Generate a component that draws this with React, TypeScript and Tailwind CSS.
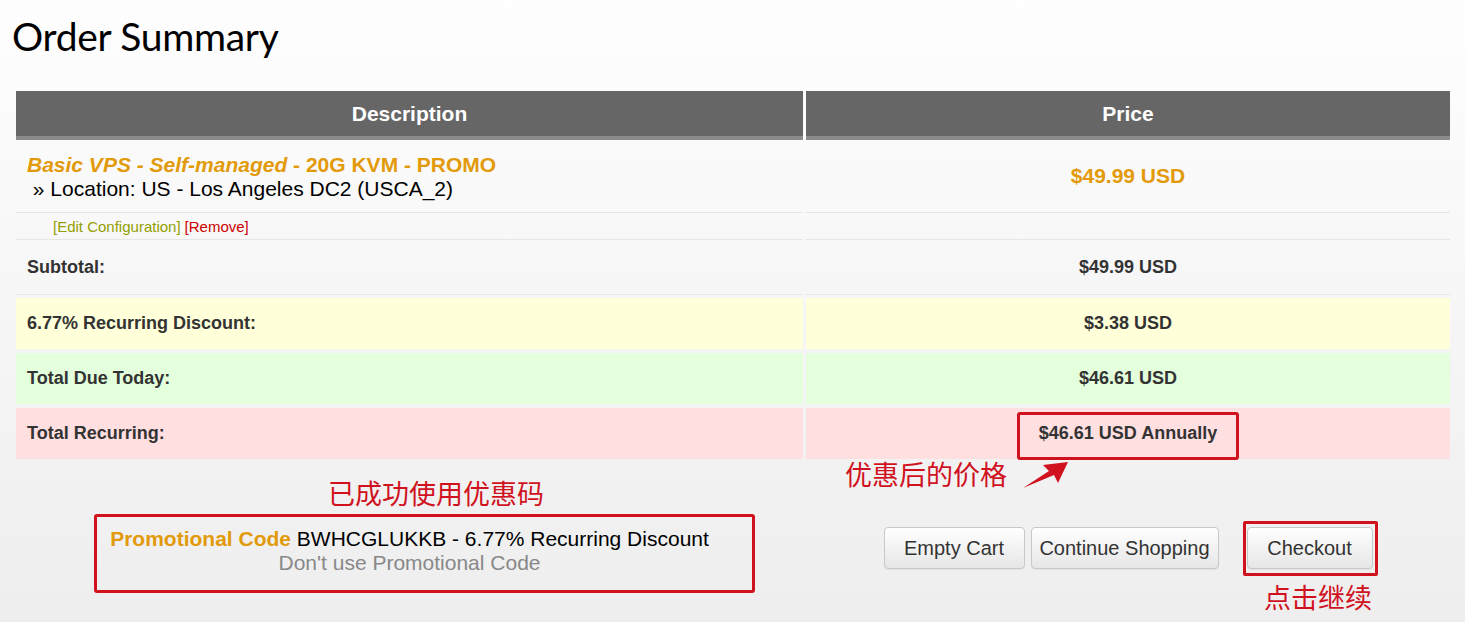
import React from "react";

const ORANGE = "text-[#e29a0a]";

function Btn({ label, w }: { label: string; w: string }) {
  return (
    <button
      className={`${w} h-[42px] rounded-[4px] border border-[#c8c8c8] bg-gradient-to-b from-white to-[#e6e6e6] text-[20px] text-[#333] shadow-[0_1px_1px_rgba(0,0,0,0.06)]`}
    >
      {label}
    </button>
  );
}

function SummaryRow({
  label,
  value,
  bg,
  className = "",
}: {
  label: string;
  value: React.ReactNode;
  bg: string;
  className?: string;
}) {
  return (
    <div className={`flex gap-[3px] ${className}`}>
      <div className={`w-[787px] h-[51px] ${bg} flex items-center pl-[11px] text-[18px] font-bold text-[#333]`}>
        {label}
      </div>
      <div className={`w-[644px] h-[51px] ${bg} flex items-center justify-center text-[18px] font-bold text-[#333]`}>
        {value}
      </div>
    </div>
  );
}

export default function App() {
  return (
    <div className="relative min-h-[622px] bg-gradient-to-b from-[#fefefe] to-[#eeeeee] font-['Liberation_Sans',Arial,sans-serif] text-black">
      <div className="h-[91px] pl-[12px] pt-[12px]">
        <h1 className="font-['Lato','Noto_Sans',sans-serif] text-[39px] leading-[48px] tracking-[-0.3px]">Order Summary</h1>
      </div>

      <div className="ml-[16px] w-[1434px]">
        {/* header */}
        <div className="flex gap-[3px]">
          <div className="w-[787px] h-[49px] bg-[#666] border-b-4 border-[#8b8b8b] flex items-center justify-center text-white text-[21px] font-bold">
            Description
          </div>
          <div className="w-[644px] h-[49px] bg-[#666] border-b-4 border-[#8b8b8b] flex items-center justify-center text-white text-[21px] font-bold">
            Price
          </div>
        </div>

        {/* product */}
        <div className="flex gap-[3px]">
          <div className="w-[787px] h-[73px] border-b border-[#e6e6e6] pt-[13px] pl-[11px] text-[21px] leading-[24px]">
            <div className={`font-bold ${ORANGE}`}>
              <span className="italic">Basic VPS - Self-managed</span> - 20G KVM - PROMO
            </div>
            <div>&nbsp;» Location: US - Los Angeles DC2 (USCA_2)</div>
          </div>
          <div className={`w-[644px] h-[73px] border-b border-[#e6e6e6] flex items-center justify-center text-[21px] font-bold ${ORANGE}`}>
            $49.99 USD
          </div>
        </div>
        <div className="flex gap-[3px]">
          <div className="w-[787px] h-[27px] border-b border-[#e6e6e6] flex items-center pt-[2px] pl-[37px] text-[15px]">
            <span className="text-[#94a000]">[Edit Configuration]</span>
            <span className="ml-[4px] text-[#cc0000]">[Remove]</span>
          </div>
          <div className="w-[644px] h-[27px] border-b border-[#e6e6e6]" />
        </div>

        {/* totals */}
        <div className="flex gap-[3px]">
          <div className="w-[787px] h-[55px] border-b border-[#e8e8e8] flex items-center pl-[11px] text-[18px] font-bold text-[#333]">
            Subtotal:
          </div>
          <div className="w-[644px] h-[55px] border-b border-[#e8e8e8] flex items-center justify-center text-[18px] font-bold text-[#333]">
            $49.99 USD
          </div>
        </div>
        <SummaryRow className="mt-[3px]" bg="bg-[#ffffd9]" label="6.77% Recurring Discount:" value="$3.38 USD" />
        <SummaryRow className="mt-[4px]" bg="bg-[#e4ffdb]" label="Total Due Today:" value="$46.61 USD" />
        <SummaryRow className="mt-[4px]" bg="bg-[#ffdfe0]" label="Total Recurring:" value="$46.61 USD Annually" />
      </div>

      {/* bottom */}
      <div className="ml-[16px] mt-[68px] w-[1434px] flex gap-[3px]">
        <div className="w-[787px] text-center text-[21px] leading-[24px]">
          <div>
            <span className={`font-bold ${ORANGE}`}>Promotional Code</span> BWHCGLUKKB - 6.77% Recurring Discount
          </div>
          <div className="text-[#888]">Don't use Promotional Code</div>
        </div>
        <div className="w-[644px] flex justify-center">
          <Btn label="Empty Cart" w="w-[141px]" />
          <div className="ml-[6px]">
            <Btn label="Continue Shopping" w="w-[188px]" />
          </div>
          <div className="ml-[28px]">
            <Btn label="Checkout" w="w-[126px]" />
          </div>
        </div>
      </div>

      {/* annotations */}
      <div className="absolute left-[1017px] top-[412px] w-[222px] h-[48px] border-[3px] border-[#d0121f] rounded-[3px]" />
      <svg className="absolute left-[1020px] top-[459px]" width="52" height="32" viewBox="0 0 52 32">
        <polygon points="3,29 29,12 23,6 48,3 38,24 34,16" fill="#d0121f" />
      </svg>
      <div className="absolute left-[845px] top-[460px] font-['Noto_Sans_CJK_SC',sans-serif] text-[27px] leading-[27px] text-[#d0121f]">
        优惠后的价格
      </div>
      <div className="absolute left-[94px] top-[514px] w-[661px] h-[79px] border-[3px] border-[#d0121f] rounded-[3px]" />
      <div className="absolute left-[328px] top-[479px] font-['Noto_Sans_CJK_SC',sans-serif] text-[27px] leading-[27px] text-[#d0121f]">
        已成功使用优惠码
      </div>
      <div className="absolute left-[1243px] top-[521px] w-[135px] h-[55px] border-[3px] border-[#d0121f] rounded-[2px]" />
      <div className="absolute left-[1264px] top-[583px] font-['Noto_Sans_CJK_SC',sans-serif] text-[27px] leading-[27px] text-[#d0121f]">
        点击继续
      </div>
    </div>
  );
}
